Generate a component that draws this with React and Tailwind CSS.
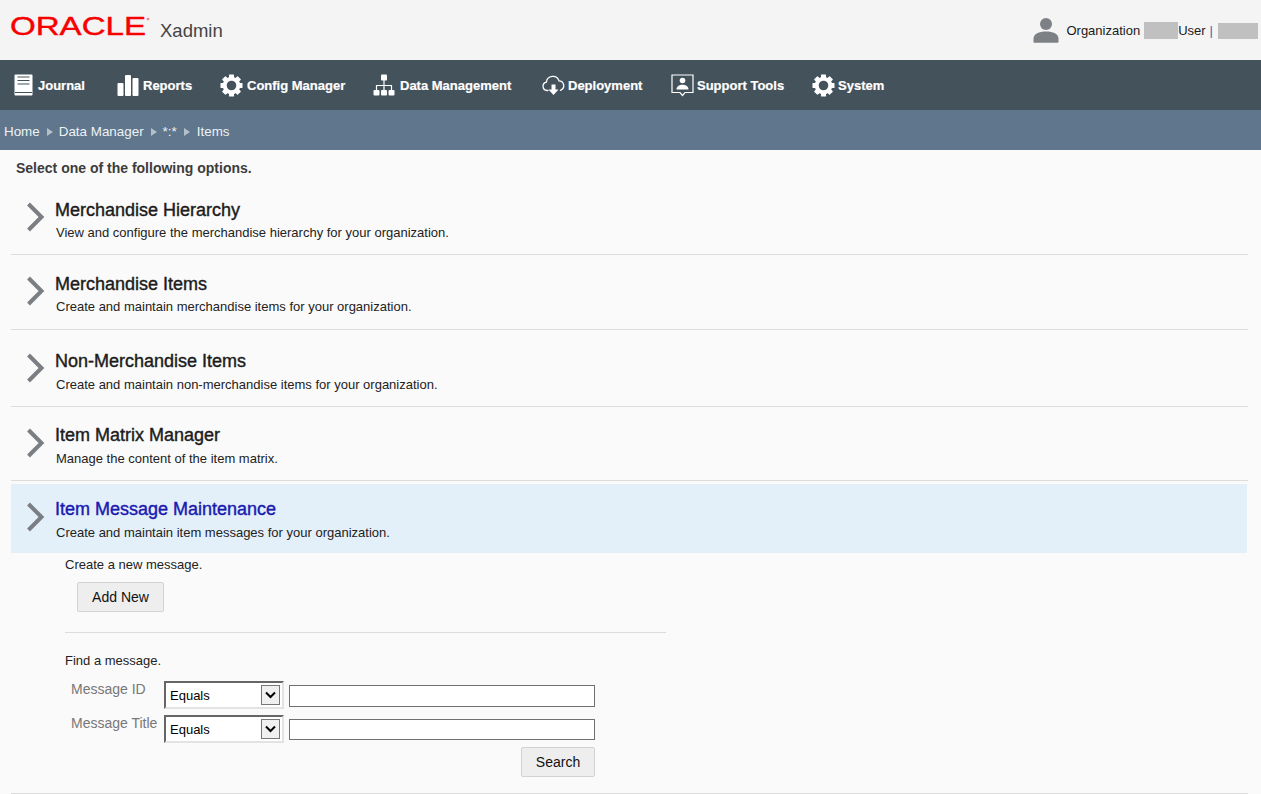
const font = { fontFamily: '"Liberation Sans", Arial, sans-serif' };

const JournalIcon = () => (
  <svg width="19" height="22" viewBox="0 0 19 22" fill="none">
    <rect x="0.500" y="0.500" width="18" height="21" rx="1" fill="#fff" />
    <path d="M3.500 3h12M3.500 6.500h12M3.500 10h12" stroke="#44525c" strokeWidth="1.200" />
    <path d="M1 18.500h17" stroke="#44525c" strokeWidth="1" />
  </svg>
);

const ReportsIcon = () => (
  <svg width="22" height="22" viewBox="0 0 22 22" fill="#fff">
    <rect x="0.5" y="9" width="6" height="13" rx="1" />
    <rect x="8" y="1" width="6" height="21" rx="1" />
    <rect x="15.5" y="4" width="6" height="18" rx="1" />
  </svg>
);

const GearIcon = () => (
  <svg width="23" height="23" viewBox="0 0 23 23" fill="#fff">
    <circle cx="11.500" cy="11.500" r="6.800" fill="none" stroke="#fff" strokeWidth="4" />
    {[0, 45, 90, 135, 180, 225, 270, 315].map((a) => (
      <rect key={a} x="9" y="0.500" width="5" height="4.500" rx="0.600" transform={`rotate(${a} 11.500 11.500)`} />
    ))}
  </svg>
);

const HierarchyIcon = () => (
  <svg width="22" height="22" viewBox="0 0 22 22" fill="#fff">
    <rect x="8" y="0.5" width="6" height="6" rx="1" />
    <rect x="0.5" y="16" width="6" height="5.5" rx="1" />
    <rect x="8" y="16" width="6" height="5.5" rx="1" />
    <rect x="15.5" y="16" width="6" height="5.5" rx="1" />
    <path d="M11 6v10M3.500 16v-4.500h15V16" stroke="#fff" strokeWidth="1.200" fill="none" />
  </svg>
);

const CloudIcon = () => (
  <svg width="23" height="22" viewBox="0 0 23 22" fill="none">
    <path d="M6 16.500H5a4.200 4.200 0 0 1-.6-8.300A6.500 6.500 0 0 1 17 6.800a4.900 4.900 0 0 1 1.500 9.500" stroke="#fff" strokeWidth="1.300" strokeLinecap="round" />
    <path d="M9.500 10.500h4v5h3l-5 5.500-5-5.500h3z" fill="#fff" />
  </svg>
);

const SupportIcon = () => (
  <svg width="23" height="23" viewBox="0 0 23 23" fill="none">
    <path d="M1 1h21v17.500h-8L11.500 21.500 9 18.500H1z" stroke="#fff" strokeWidth="1.200" />
    <circle cx="11.500" cy="6.500" r="2.800" fill="#fff" />
    <path d="M5.500 15.500c0-3 2.500-4.800 6-4.800s6 1.800 6 4.800z" fill="#fff" />
  </svg>
);

const UserIcon = () => (
  <svg width="26" height="26" viewBox="0 0 26 26" fill="#7d8084">
    <circle cx="13" cy="7" r="6" />
    <path d="M0.500 25v-3.500C0.500 17 6 14.500 13 14.500s12.500 2.500 12.500 7V25a.8.8 0 0 1-.8.8H1.300A.8.8 0 0 1 .5 25z" />
  </svg>
);

const Chevron = () => (
  <svg width="19" height="30" viewBox="0 0 19 30" fill="none" className="shrink-0">
    <path d="M2.500 2l13 13-13 13" stroke="#7b7e83" strokeWidth="4" />
  </svg>
);

const Sep = () => (
  <span className="w-0 h-0 -mt-[1px] border-y-[4px] border-y-transparent border-l-[6px] border-l-[#b4bfc9]" />
);

const navItems = [
  { label: "Journal", icon: <JournalIcon />, box: "w-[117px] pl-[14px] gap-[5px]" },
  { label: "Reports", icon: <ReportsIcon />, box: "w-[103px] gap-[4px]" },
  { label: "Config Manager", icon: <GearIcon />, box: "w-[153px] gap-[4px]" },
  { label: "Data Management", icon: <HierarchyIcon />, box: "w-[169px] gap-[5px]" },
  { label: "Deployment", icon: <CloudIcon />, box: "w-[129px] gap-[3px]" },
  { label: "Support Tools", icon: <SupportIcon />, box: "w-[141px] gap-[3px]" },
  { label: "System", icon: <GearIcon />, box: "gap-[3px]" },
];

const options = [
  { title: "Merchandise Hierarchy", text: "View and configure the merchandise hierarchy for your organization.", box: "h-[75px] pt-[19px]", gap: "mt-[5px]", chev: "pt-[3px]" },
  { title: "Merchandise Items", text: "Create and maintain merchandise items for your organization.", box: "h-[75px] pt-[18px]", gap: "mt-[5px]", chev: "pt-[3px]" },
  { title: "Non-Merchandise Items", text: "Create and maintain non-merchandise items for your organization.", box: "h-[77px] pt-[20px]", gap: "mt-[6px]", chev: "pt-[3px]" },
  { title: "Item Matrix Manager", text: "Manage the content of the item matrix.", box: "h-[74px] pt-[17px]", gap: "mt-[6px]", chev: "pt-[4px]" },
];

const OptionRow = ({ title, text, box, gap, chev }) => (
  <div className={`flex gap-[10px] pl-[15px] border-b border-[#dcdcdc] ${box}`}>
    <div className={chev}>
      <Chevron />
    </div>
    <div>
      <h2 className="text-[18px] leading-[22px] font-medium text-[#1c1c1c] [-webkit-text-stroke:0.4px_#1c1c1c]">{title}</h2>
      <p className={`text-[13px] leading-[14px] ml-px text-[#222] ${gap}`}>{text}</p>
    </div>
  </div>
);

const SelectBox = () => (
  <div className="relative w-[120px] h-[28px]">
    <select className="w-full h-full appearance-none bg-white pl-[4px] pt-[2px] text-[13px] text-black border-2 border-t-[#666] border-l-[#666] border-b-[#e3e3e3] border-r-[#e3e3e3] rounded-none outline-none">
      <option>Equals</option>
    </select>
    <span className="absolute right-[4px] top-[4px] w-[19px] h-[20px] bg-[#f0f0f0] border border-[#777] flex items-center justify-center pointer-events-none">
      <svg width="11" height="8" viewBox="0 0 11 8" fill="none">
        <path d="M1 1.500l4.500 4.500 4.500-4.500" stroke="#000" strokeWidth="2" />
      </svg>
    </span>
  </div>
);

const GrayButton = ({ children, className }) => (
  <button className={`h-[30px] bg-[#eeeeee] border border-[#d2d2d2] rounded-[2px] text-[14px] text-[#111] ${className}`}>
    {children}
  </button>
);

const App = () => {
  return (
    <div className="w-[1261px] h-[794px] overflow-hidden bg-[#fafafa]" style={font}>
      <header className="h-[60px] bg-[#f4f4f4] flex items-center pl-[10px] pr-[3px]">
        <svg width="142" height="40" viewBox="0 0 142 40">
          <text x="0" y="25" fontSize="25" fill="#f80000" stroke="#f80000" strokeWidth="0.4" textLength="136" lengthAdjust="spacingAndGlyphs" style={font}>ORACLE</text>
          <circle cx="138" cy="9" r="1.300" fill="#f08080" />
        </svg>
        <span className="ml-[8px] mt-[1px] text-[18.500px] text-[#444]">Xadmin</span>
        <div className="ml-auto flex items-center text-[13px] text-[#1a1a1a]">
          <UserIcon />
          <span className="ml-[7px] mt-[2px]">Organization</span>
          <span className="ml-[4px] mt-[1px] w-[34px] h-[17px] bg-[#c0c0c0]" />
          <span className="mt-[2px]">User</span>
          <span className="ml-[4px] mt-[2px] text-[#1f6fb5]">|</span>
          <span className="ml-[5px] mt-[1px] w-[40px] h-[16px] bg-[#c0c0c0]" />
        </div>
      </header>

      <nav className="h-[50px] bg-[#44525c] flex items-center text-white text-[13px] font-bold">
        {navItems.map((item) => (
          <div key={item.label} className={`flex items-center shrink-0 ${item.box}`}>
            {item.icon}
            <span className="mt-[1px] [-webkit-text-stroke:0.2px_#fff]">{item.label}</span>
          </div>
        ))}
      </nav>

      <div className="h-[40px] bg-[#5f768c] flex items-center pl-[4px] gap-[7px] pt-[4px] text-[13.400px] text-[#eef2f5]">
        <span>Home</span>
        <Sep />
        <span className="-ml-px">Data Manager</span>
        <Sep />
        <span className="-ml-px">*:*</span>
        <Sep />
        <span>Items</span>
      </div>

      <main className="px-[11px] mr-[2px]">
        <p className="h-[30px] pt-[11px] pl-[5px] text-[14px] leading-[15px] font-bold text-[#3c3c3c]">Select one of the following options.</p>
        {options.map((o) => (
          <OptionRow key={o.title} {...o} />
        ))}

        <div className="mt-[3px] mr-px h-[69px] bg-[#e3f0fa] flex gap-[10px] pl-[15px] pt-[14px]">
          <div className="pt-[4px]">
            <Chevron />
          </div>
          <div>
            <h2 className="text-[18px] leading-[22px] font-medium text-[#1a1ab0] [-webkit-text-stroke:0.4px_#1a1ab0]">Item Message Maintenance</h2>
            <p className="text-[13px] leading-[14px] mt-[6px] ml-px text-[#222]">Create and maintain item messages for your organization.</p>
          </div>
        </div>

        <div className="border-b border-[#dcdcdc] h-[241px] pl-[54px] text-[13px] text-[#222]">
          <p className="leading-[14px] pt-[5px] h-[18px]">Create a new message.</p>
          <GrayButton className="mt-[11px] ml-[12px] w-[87px]">Add New</GrayButton>
          <div className="w-[601px] mt-[20px] border-t border-[#dcdcdc]" />
          <p className="leading-[14px] mt-[21px]">Find a message.</p>
          <div className="w-[530px] mt-[13px] text-[14px]">
            <div className="flex h-[34px]">
              <label className="w-[99px] pl-[6px] -mt-[2px] text-[#777]">Message ID</label>
              <SelectBox />
              <input className="ml-[5px] mt-[4px] w-[306px] h-[22px] bg-white border border-[#707070]" />
            </div>
            <div className="flex h-[32px]">
              <label className="w-[99px] pl-[6px] -mt-[2px] text-[#777]">Message Title</label>
              <SelectBox />
              <input className="ml-[5px] mt-[4px] w-[306px] h-[21px] bg-white border border-[#707070]" />
            </div>
            <div className="flex justify-end">
              <GrayButton className="w-[74px]">Search</GrayButton>
            </div>
          </div>
        </div>
      </main>
    </div>
  );
};

export default App;
